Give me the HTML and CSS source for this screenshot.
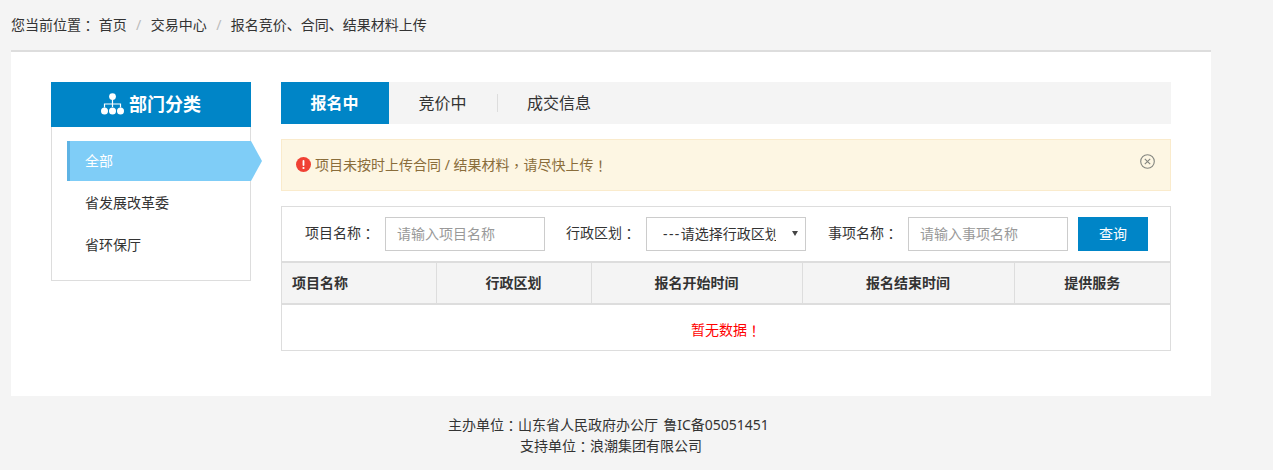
FILE: index.html
```html
<!DOCTYPE html>
<html lang="zh-CN">
<head>
    <meta charset="UTF-8">
    <title>报名竞价、合同、结果材料上传</title>
    <link rel="stylesheet" href="styles.css">
</head>
<body>

<div class="wrap">
    <div class="crumb">
        <span class="crumb-label">您当前位置<span class="p">：</span></span>
        <a href="#">首页</a>
        <i>/</i>
        <a href="#">交易中心</a>
        <i>/</i>
        <span>报名竞价、合同、结果材料上传</span>
    </div>

    <div class="main">
        <!-- 左侧部门 -->
        <div class="side">
            <div class="side-title">
                <svg class="side-icon" width="23" height="22" viewBox="0 0 23 22">
                    <circle cx="11.5" cy="3.6" r="3.4" fill="#fff"/>
                    <path d="M11.5 7v7M3.5 14.5v-3.5h16v3.5" stroke="#fff" stroke-width="1.2" fill="none"/>
                    <circle cx="3.5" cy="18" r="3.5" fill="#fff"/>
                    <circle cx="11.5" cy="18" r="3.5" fill="#fff"/>
                    <circle cx="19.5" cy="18" r="3.5" fill="#fff"/>
                </svg>
                <span>部门分类</span>
            </div>
            <ul class="side-list">
                <li class="active">全部</li>
                <li>省发展改革委</li>
                <li>省环保厅</li>
            </ul>
        </div>

        <div class="content">
            <div class="tabs">
                <div class="tab active">报名中</div>
                <div class="tab">竞价中</div>
                <div class="tab tab-last">成交信息</div>
            </div>

            <div class="alert">
                <svg class="alert-icon" width="15" height="15" viewBox="0 0 15 15">
                    <circle cx="7.5" cy="7.5" r="7.5" fill="#f04134"/>
                    <rect x="6.6" y="3" width="1.8" height="6" rx="0.9" fill="#fff"/>
                    <circle cx="7.5" cy="11" r="1.1" fill="#fff"/>
                </svg>
                <span>项目未按时上传合同 / 结果材料<span class="p">，</span>请尽快上传<span class="p">！</span></span>
                <svg class="alert-close" width="15" height="15" viewBox="0 0 15 15">
                    <circle cx="7.5" cy="7.5" r="6.8" fill="none" stroke="#83857f" stroke-width="1.1"/>
                    <path d="M4.8 4.8l5.4 5.4M10.2 4.8l-5.4 5.4" stroke="#83857f" stroke-width="1.1"/>
                </svg>
            </div>

            <div class="panel">
                <div class="filter">
                    <label>项目名称<span class="p">：</span></label>
                    <input class="field" type="text" placeholder="请输入项目名称">
                    <label>行政区划<span class="p">：</span></label>
                    <div class="select-box"><span><span class="dash">---</span>请选择行政区划</span></div>
                    <label>事项名称<span class="p">：</span></label>
                    <input class="field field-last" type="text" placeholder="请输入事项名称">
                    <button class="btn">查询</button>
                </div>
                <table class="list">
                    <thead>
                        <tr>
                            <th class="col-name">项目名称</th>
                            <th class="col-area">行政区划</th>
                            <th class="col-time">报名开始时间</th>
                            <th class="col-time2">报名结束时间</th>
                            <th>提供服务</th>
                        </tr>
                    </thead>
                    <tbody>
                        <tr><td colspan="5" class="empty">暂无数据<span class="p">！</span></td></tr>
                    </tbody>
                </table>
            </div>
        </div>
    </div>

    <div class="footer">
        <p>主办单位<span class="p">：</span>山东省人民政府办公厅 鲁IC备05051451&nbsp;</p>
        <p>支持单位<span class="p">：</span>浪潮集团有限公司</p>
    </div>
</div>

</body>
</html>
```

FILE: styles.css
```css
* {
    box-sizing: border-box;
}

body {
    margin: 0;
    background-color: #f4f4f4;
    color: #333;
    font-family: "Noto Sans", "Noto Sans CJK SC", sans-serif;
    font-size: 14px;
}

/* 居中的全角标点 */
.p {
    font-family: "Noto Sans CJK TC", sans-serif;
    font-feature-settings: "locl" 0;
    vertical-align: -1px;
}

.wrap {
    width: 1200px;
    margin-left: 11px;
}

.crumb {
    height: 50px;
    line-height: 50px;
    white-space: nowrap;
}

.crumb a {
    color: #333;
    text-decoration: none;
}

.crumb i {
    margin: 0 5.8px;
    color: #bbb;
    font-style: normal;
}

.main {
    display: flex;
    height: 346px;
    padding: 30px 40px 0;
    border-top: 2px solid #ddd;
    background-color: #fff;
}

/* 左侧 */
.side {
    width: 200px;
    margin-right: 30px;
}

.side-title {
    display: flex;
    align-items: center;
    justify-content: center;
    height: 45px;
    padding-bottom: 3px;
    background-color: #0085c7;
    color: #fff;
    font-size: 18px;
    font-weight: bold;
}

.side-icon {
    margin-top: 1px;
    margin-right: 5px;
}

.side-list {
    height: 154px;
    margin: 0;
    padding: 14px 0 0 15px;
    border: 1px solid #ddd;
    border-top: none;
    list-style: none;
}

.side-list li {
    height: 40px;
    margin-bottom: 2px;
    padding-left: 18px;
    line-height: 40px;
}

.side-list li.active {
    position: relative;
    width: 184px;
    border-left: 3px solid #5eb3e4;
    padding-left: 15px;
    background-color: #7fcdf7;
    color: #fff;
}

.side-list li.active::after {
    content: "";
    position: absolute;
    top: 0;
    left: 181px;
    border-top: 20px solid transparent;
    border-bottom: 20px solid transparent;
    border-left: 11px solid #7fcdf7;
}

/* 右侧 */
.content {
    width: 890px;
}

.tabs {
    display: flex;
    align-items: center;
    height: 42px;
    margin-bottom: 15px;
    background-color: #f4f4f4;
}

.tab {
    width: 108px;
    height: 42px;
    padding-right: 1px;
    color: #333;
    font-size: 16px;
    line-height: 42px;
    text-align: center;
}

.tab-last {
    width: auto;
    height: 18px;
    padding: 0 0 0 29px;
    border-left: 1px solid #ddd;
    line-height: 18px;
}

.tab.active {
    background-color: #0085c7;
    color: #fff;
    font-weight: bold;
}

.alert {
    display: flex;
    align-items: center;
    height: 52px;
    margin-bottom: 15px;
    padding: 0 15px 2px 14px;
    border: 1px solid #faebcc;
    background-color: #fdf6e3;
    color: #8a6d3b;
}

.alert-icon {
    margin-right: 4px;
}

.alert-close {
    margin-left: auto;
    margin-top: -6px;
}

.panel {
    height: 145px;
    border: 1px solid #ddd;
}

.filter {
    display: flex;
    align-items: center;
    height: 54px;
    padding-left: 23px;
    padding-bottom: 1px;
}

.filter label {
    margin-right: 10px;
    padding-bottom: 2px;
    white-space: nowrap;
}

.field {
    width: 160px;
    height: 34px;
    margin-right: 21px;
    padding: 0 11px;
    border: 1px solid #ccc;
    font-family: inherit;
    font-size: 14px;
}

.field-last {
    margin-right: 10px;
}

.field::placeholder {
    color: #999;
}

.select-box {
    position: relative;
    width: 160px;
    height: 34px;
    margin-right: 22px;
    padding-left: 16px;
    border: 1px solid #ccc;
    line-height: 32px;
    white-space: nowrap;
}

.select-box > span {
    display: block;
    width: 113px;
    overflow: hidden;
}

.dash {
    letter-spacing: 1.4px;
}

.select-box::after {
    content: "";
    position: absolute;
    top: 13px;
    right: 7px;
    border-top: 5px solid #444;
    border-left: 3px solid transparent;
    border-right: 3px solid transparent;
}

.btn {
    width: 70px;
    height: 34px;
    padding: 0 0 1px;
    border: none;
    background-color: #0085c7;
    color: #fff;
    font-family: inherit;
    font-size: 14px;
}

.list {
    width: 100%;
    border-collapse: collapse;
    table-layout: fixed;
}

.list th {
    height: 42px;
    padding-bottom: 4px;
    border-top: 2px solid #ddd;
    border-bottom: 2px solid #ddd;
    border-left: 1px solid #ddd;
    background-color: #f4f4f4;
    font-size: 14px;
    text-align: center;
}

.list th:first-child {
    border-left: none;
}

.col-name {
    width: 154px;
    padding-left: 10px;
    text-align: left !important;
}

.col-area {
    width: 155px;
}

.col-time {
    width: 211px;
}

.col-time2 {
    width: 212px;
}

.empty {
    height: 46px;
    padding: 3px 0 0;
    color: #f00;
    text-align: center;
}

.footer {
    padding-top: 18px;
    color: #333;
    text-align: center;
    line-height: 21px;
    word-spacing: 1.5px;
}

.footer p {
    height: 21px;
    margin: 0;
}
```
